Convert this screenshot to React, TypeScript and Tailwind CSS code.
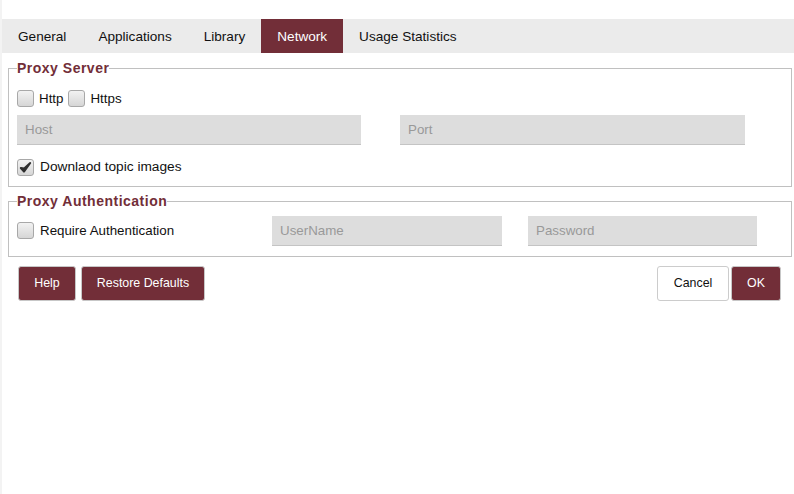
import React from "react";

const TABS = ["General", "Applications", "Library", "Network", "Usage Statistics"];
const ACTIVE = "Network";

function Checkbox({ checked = false }: { checked?: boolean }) {
  return (
    <span className="flex h-[17px] w-[17px] shrink-0 items-center justify-center rounded-[3px] border border-[#a8a8a8] bg-gradient-to-b from-[#f2f2f2] to-[#d6d6d6]">
      {checked && (
        <svg width="13" height="13" viewBox="0 0 13 13">
          <path d="M1.8 7 L5 10.6 L11.2 2 L5.2 7.6 Z" fill="#2e2e2e" stroke="#2e2e2e" strokeWidth="2" strokeLinejoin="round" />
        </svg>
      )}
    </span>
  );
}

function Field({ placeholder, w }: { placeholder: string; w: string }) {
  return (
    <input
      placeholder={placeholder}
      className={`${w} h-[30px] border-b border-[#c4c4c4] bg-[#dddddd] px-2 text-[13.33px] text-[#333] placeholder:text-[#999] outline-none`}
    />
  );
}

export default function App() {
  return (
    <div className="min-h-[494px] border-l-2 border-[#f3f3f3] bg-white pt-[19px] font-['Liberation_Sans',Arial,sans-serif] text-[13.33px] text-[#111]">
      {/* tabs */}
      <div className="flex h-[34px] bg-[#ebebeb] text-[13.6px]">
        {TABS.map((t) => (
          <div
            key={t}
            className={`flex items-center px-4 pt-[2px] ${t === ACTIVE ? "bg-[#722e38] text-white" : ""}`}
          >
            {t}
          </div>
        ))}
      </div>

      <div className="pl-[6px] pr-[2px]">
        <fieldset className="mt-[7px] border border-[#c0c0c0] px-2 pb-[10px]">
          <legend className="px-0 text-[14px] leading-4 font-bold tracking-[0.5px] text-[#722e38]">Proxy Server</legend>
          <div className="mt-[14px] flex h-[17px] items-center">
            <Checkbox />
            <span className="ml-[5px]">Http</span>
            <span className="ml-[5px]">
              <Checkbox />
            </span>
            <span className="ml-[5px]">Https</span>
          </div>
          <div className="mt-[8px] flex gap-[39px]">
            <Field placeholder="Host" w="w-[344px]" />
            <Field placeholder="Port" w="w-[345px]" />
          </div>
          <div className="mt-[14px] flex h-[17px] items-center gap-[6px]">
            <Checkbox checked />
            <span className="text-[13.7px]">Downlaod topic images</span>
          </div>
        </fieldset>

        <fieldset className="mt-[6px] border border-[#c0c0c0] px-2 pb-[10px]">
          <legend className="px-0 text-[14px] leading-4 font-bold tracking-[0.5px] text-[#722e38]">
            Proxy Authentication
          </legend>
          <div className="mt-[7px] flex items-center">
            <div className="flex w-[255px] items-center gap-[6px]">
              <Checkbox />
              <span>Require Authentication</span>
            </div>
            <Field placeholder="UserName" w="w-[230px]" />
            <div className="w-[26px]" />
            <Field placeholder="Password" w="w-[229px]" />
          </div>
        </fieldset>

        <div className="mt-[9px] flex items-center justify-between pl-[10px] pr-[11px] text-[12.4px]">
          <div className="flex gap-[5px]">
            <button className="h-[35px] w-[58px] rounded-[3px] border border-[#c7c7c7] bg-[#722e38] text-white">Help</button>
            <button className="h-[35px] w-[124px] rounded-[3px] border border-[#c7c7c7] bg-[#722e38] text-white">
              Restore Defaults
            </button>
          </div>
          <div className="flex gap-[2px]">
            <button className="h-[35px] w-[72px] rounded-[3px] border border-[#cccccc] bg-white text-[#111]">Cancel</button>
            <button className="h-[35px] w-[50px] rounded-[3px] border border-[#c7c7c7] bg-[#722e38] text-white">OK</button>
          </div>
        </div>
      </div>
    </div>
  );
}
